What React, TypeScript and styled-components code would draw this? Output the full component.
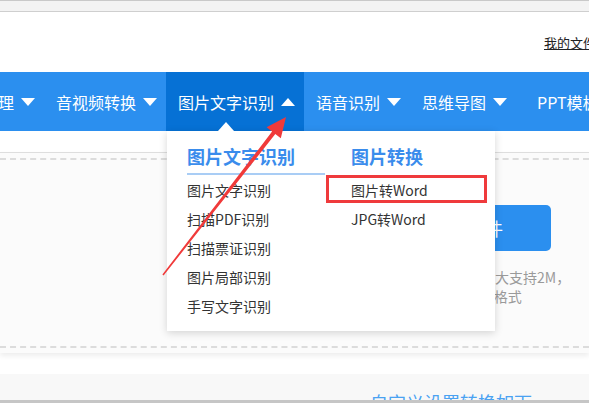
import React from "react";
import styled, { createGlobalStyle } from "styled-components";

const GlobalStyle = createGlobalStyle`
  html, body {
    margin: 0;
    padding: 0;
    overflow: hidden;
    background: #fff;
  }
  body {
    font-family: "Microsoft YaHei", "Noto Sans CJK SC", "Noto Sans", sans-serif;
  }
`;

const Page = styled.div`
  position: relative;
  width: 589px;
  height: 400px;
  overflow: hidden;
  border-bottom: 3px solid #c6c6c6;
`;

const TopStrip = styled.div`
  height: 10px;
  background: #f3f3f3;
  border-top: 1px solid #c9c9c9;
  border-bottom: 1px solid #cfcfcf;
`;

const Header = styled.div`
  height: 60px;
  display: flex;
  align-items: center;
  justify-content: flex-end;
  padding-top: 2px;
  box-sizing: border-box;
`;

const MyFiles = styled.a`
  margin-right: -7px;
  font-size: 13px;
  line-height: 18px;
  color: #222;
  text-decoration: underline;
  white-space: nowrap;
`;

const Nav = styled.nav`
  position: relative;
  z-index: 5;
  height: 59px;
  background: #2b8fef;
  display: flex;
  margin-left: -30px;
`;

const NavItem = styled.div<{ $active?: boolean; $extra?: number }>`
  position: relative;
  flex-shrink: 0;
  display: flex;
  align-items: center;
  gap: 7px;
  padding: 0 9px 0 12px;
  margin-left: ${(p) => p.$extra || 0}px;
  background: ${(p) => (p.$active ? "#0671d5" : "transparent")};
  color: #fff;
  font-size: 16px;
  line-height: 22px;
  white-space: nowrap;
`;

const Tri = styled.span<{ $up?: boolean }>`
  width: 0;
  height: 0;
  border-left: 7.5px solid transparent;
  border-right: 7.5px solid transparent;
  ${(p) =>
    p.$up ? "border-bottom: 8px solid #fff;" : "border-top: 8px solid #fff;"}
  margin-top: 1px;
`;

const Dropdown = styled.div`
  position: absolute;
  top: 100%;
  left: 1px;
  width: 328px;
  height: 200px;
  box-sizing: border-box;
  padding: 12px 6px 0 20px;
  background: #fff;
  box-shadow: 0 2px 8px rgba(0, 0, 0, 0.16);
  display: grid;
  grid-template-columns: 138px 138px;
  column-gap: 26px;
  align-items: start;
  cursor: default;
`;

const Caret = styled.span`
  position: absolute;
  top: -9px;
  left: 51px;
  width: 0;
  height: 0;
  border-left: 8.5px solid transparent;
  border-right: 8.5px solid transparent;
  border-bottom: 9px solid #fff;
`;

const Column = styled.div`
  display: flex;
  flex-direction: column;
`;

const ColTitle = styled.div<{ $line?: boolean }>`
  font-size: 18px;
  line-height: 26px;
  font-weight: bold;
  color: #3a8cec;
  padding-bottom: 4px;
  border-bottom: 2px solid ${(p) => (p.$line ? "#a9cdf5" : "transparent")};
  margin-bottom: 1px;
`;

const MenuLink = styled.div`
  font-size: 14px;
  line-height: 29px;
  color: #333;
`;

const RedBox = styled.div`
  position: absolute;
  left: 159px;
  top: 44px;
  width: 161px;
  height: 28px;
  box-sizing: border-box;
  border: 3px solid #ef3a3c;
`;

const Spacer = styled.div`
  height: 21px;
`;

const Panel = styled.section`
  background: #fbfbfb;
  border-top: 1px solid #dedede;
  padding: 5px 0 5px;
  box-shadow: 0 3px 5px rgba(0, 0, 0, 0.07);
`;

const DashedBox = styled.div`
  border-top: 2px dashed #dcdcdc;
  border-bottom: 2px dashed #dcdcdc;
  display: flex;
  justify-content: flex-end;
  padding: 45px 38px 0 0;
  height: 141px;
`;

const UploadCol = styled.div`
  width: 168px;
  flex-shrink: 0;
  display: flex;
  flex-direction: column;
`;

const UploadButton = styled.button`
  height: 46px;
  border: none;
  border-radius: 5px;
  background: #2b8fef;
  color: #fff;
  font-family: inherit;
  font-size: 18px;
  padding: 0;
`;

const Hint = styled.div`
  margin-top: 17px;
  font-size: 14px;
  line-height: 19px;
  color: #9a9a9a;
  white-space: nowrap;
`;

const Bottom = styled.div`
  margin-top: 21px;
  height: 40px;
  background: #f8f8f8;
  padding: 15px 0 0 370px;
  box-sizing: border-box;
`;

const SectionTitle = styled.div`
  font-size: 18px;
  line-height: 26px;
  color: #4aa2f2;
  white-space: nowrap;
`;

const Annotation = styled.svg`
  position: absolute;
  left: 0;
  top: 0;
  z-index: 10;
  pointer-events: none;
`;

const navItems = ["管理", "音视频转换", "图片文字识别", "语音识别", "思维导图"];

const ocrLinks = ["图片文字识别", "扫描PDF识别", "扫描票证识别", "图片局部识别", "手写文字识别"];
const convertLinks = ["图片转Word", "JPG转Word"];

export default function App() {
  return (
    <>
      <GlobalStyle />
      <Page>
        <TopStrip />
        <Header>
          <MyFiles>我的文件</MyFiles>
        </Header>
        <Nav>
          {navItems.map((label) => {
            const active = label === "图片文字识别";
            return (
              <NavItem key={label} $active={active}>
                {label}
                <Tri $up={active} />
                {active && (
                  <Dropdown>
                    <Caret />
                    <Column>
                      <ColTitle $line>图片文字识别</ColTitle>
                      {ocrLinks.map((l) => (
                        <MenuLink key={l}>{l}</MenuLink>
                      ))}
                    </Column>
                    <Column>
                      <ColTitle>图片转换</ColTitle>
                      {convertLinks.map((l) => (
                        <MenuLink key={l}>{l}</MenuLink>
                      ))}
                    </Column>
                    <RedBox />
                  </Dropdown>
                )}
              </NavItem>
            );
          })}
          <NavItem $extra={9}>PPT模板</NavItem>
        </Nav>
        <Spacer />
        <Panel>
          <DashedBox>
            <UploadCol>
              <UploadButton>选择文件</UploadButton>
              <Hint>
                上传的图片文件最大支持2M，
                <br />
                支持JPG、PNG等格式
              </Hint>
            </UploadCol>
          </DashedBox>
        </Panel>
        <Bottom>
          <SectionTitle>自定义设置转换如下</SectionTitle>
        </Bottom>
        <Annotation width="589" height="403" viewBox="0 0 589 403">
          <polygon
            points="162.4,274.5 272.1,131.6 266.6,127.3 286,117 280.8,138.3 275.3,134 163.6,275.5"
            fill="#f03a3a"
          />
        </Annotation>
      </Page>
    </>
  );
}
